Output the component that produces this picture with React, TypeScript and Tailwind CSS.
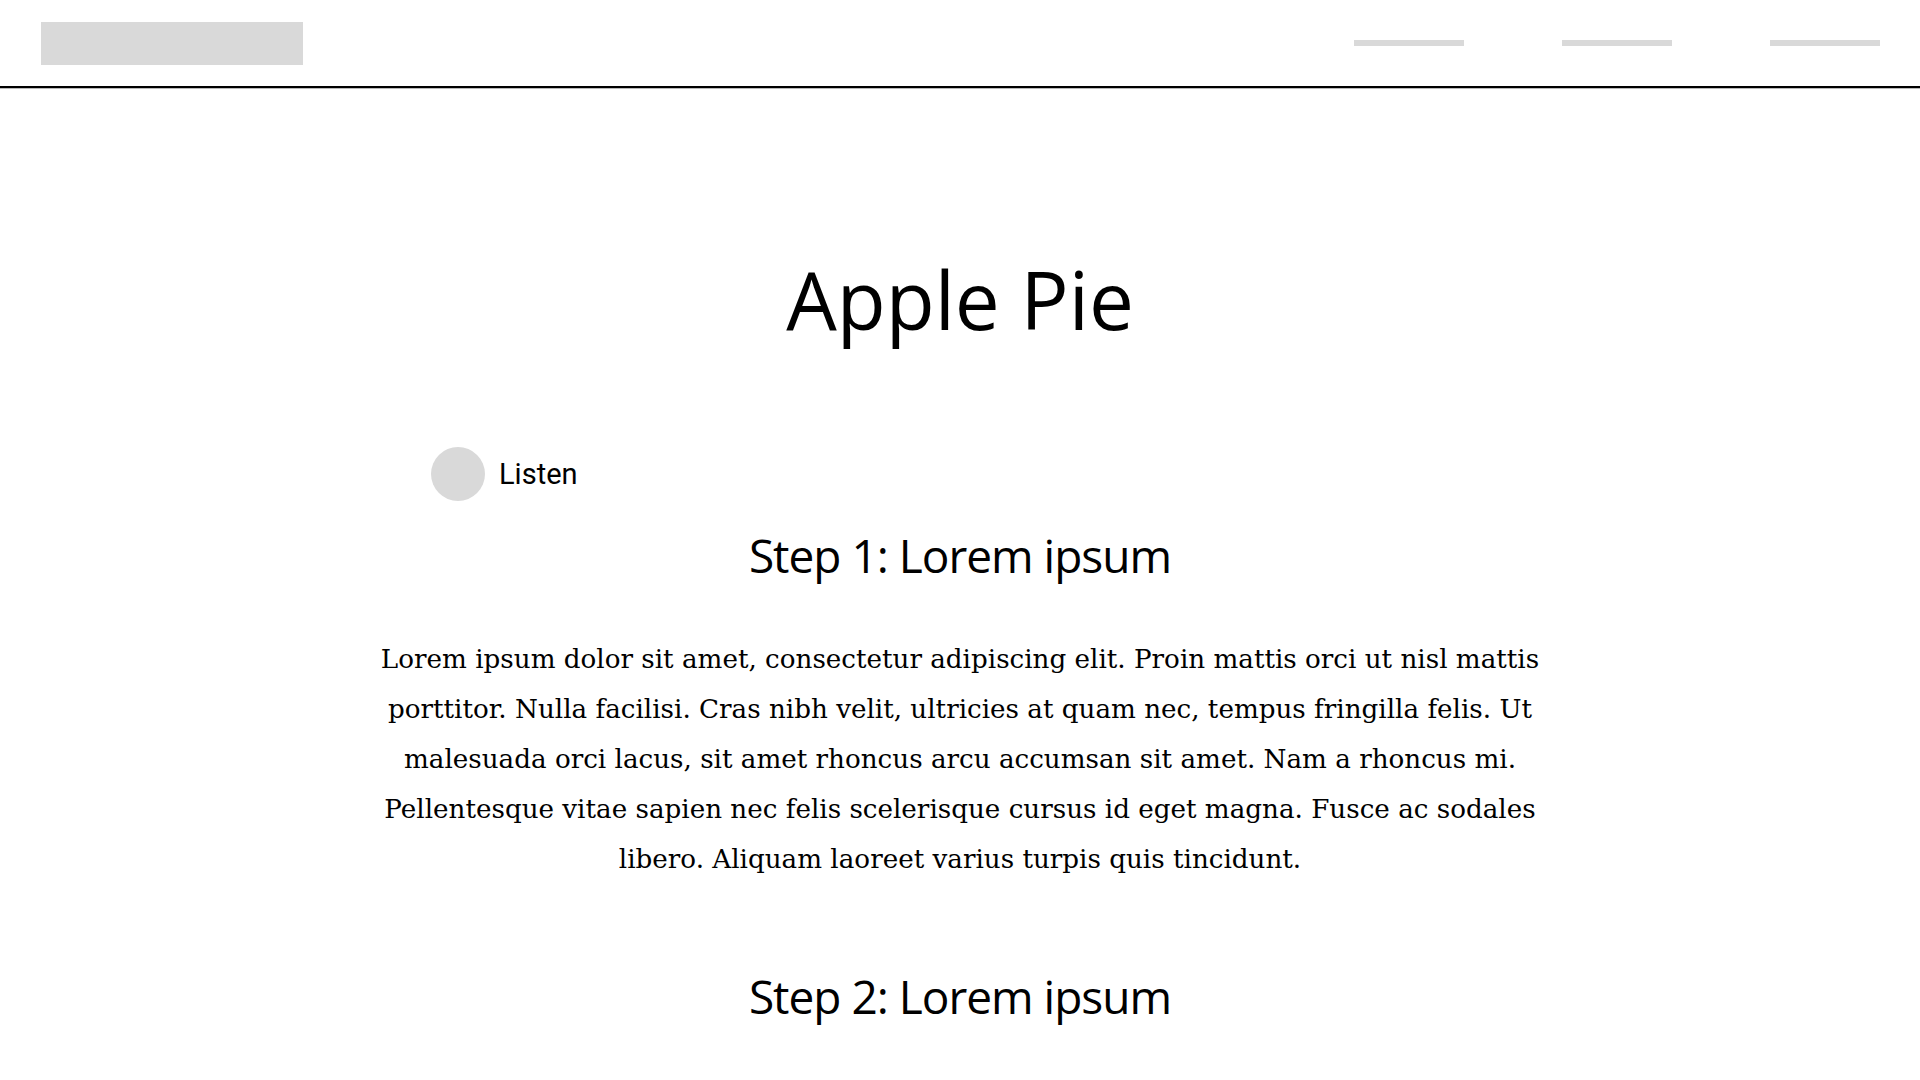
import React from "react";

const sans = { fontFamily: '"Open Sans", "Noto Sans", sans-serif' };

export default function App() {
  return (
    <div className="min-h-screen w-full bg-white text-black">
      <header className="flex h-[88px] items-center justify-between border-b-2 border-black pl-[41px] pr-[40px] shadow-[0_1px_0_0_#b8b8b8]">
        <div className="h-[43px] w-[262px] bg-[#d9d9d9]" />
        <nav className="flex items-center gap-[98px]">
          <div className="h-[6px] w-[110px] bg-[#d9d9d9]" />
          <div className="h-[6px] w-[110px] bg-[#d9d9d9]" />
          <div className="h-[6px] w-[110px] bg-[#d9d9d9]" />
        </nav>
      </header>

      <main className="flex flex-col items-center">
        <h1 className="mt-[171px] text-[80px] font-normal leading-none text-black" style={sans}>
          Apple Pie
        </h1>

        <div className="mt-[108px] flex w-[1058px] items-center gap-[14px]">
          <div className="h-[54px] w-[54px] rounded-full bg-[#d9d9d9]" />
          <span
            className="text-[29px] leading-none"
            style={{ fontFamily: 'Roboto, "Liberation Sans", sans-serif' }}
          >
            Listen
          </span>
        </div>

        <h2 className="mt-[31px] text-[46px] font-normal leading-none tracking-[-1px]" style={sans}>
          Step 1: Lorem ipsum
        </h2>

        <p
          className="mt-[56px] w-[1300px] text-center text-[26.2px] leading-[50px]"
          style={{ fontFamily: '"DejaVu Serif", "Liberation Serif", serif' }}
        >
          Lorem ipsum dolor sit amet, consectetur adipiscing elit. Proin mattis orci ut nisl mattis
          <br />
          porttitor. Nulla facilisi. Cras nibh velit, ultricies at quam nec, tempus fringilla felis. Ut
          <br />
          malesuada orci lacus, sit amet rhoncus arcu accumsan sit amet. Nam a rhoncus mi.
          <br />
          Pellentesque vitae sapien nec felis scelerisque cursus id eget magna. Fusce ac sodales
          <br />
          libero. Aliquam laoreet varius turpis quis tincidunt.
        </p>

        <h2 className="mt-[89px] text-[46px] font-normal leading-none tracking-[-1px]" style={sans}>
          Step 2: Lorem ipsum
        </h2>
      </main>
    </div>
  );
}
